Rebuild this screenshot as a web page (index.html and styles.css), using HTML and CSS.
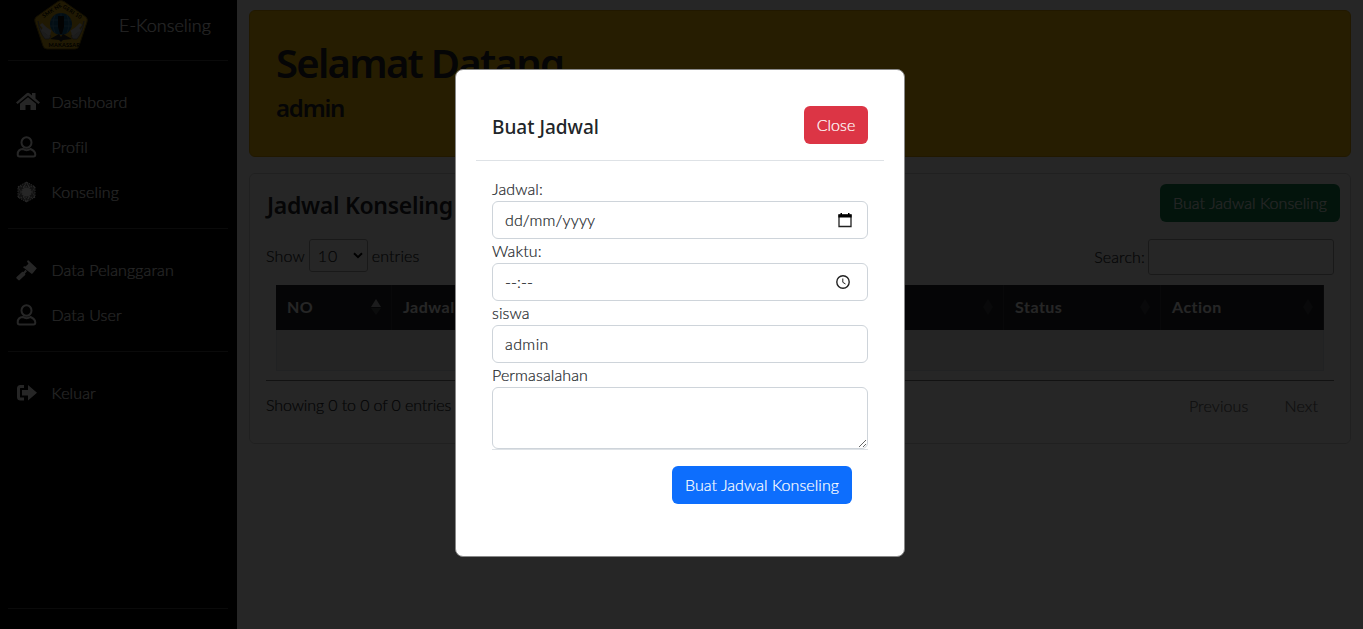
FILE: index.html
```html
<!DOCTYPE html>
<html lang="id">
<head>
<meta charset="utf-8">
<title>E-Konseling</title>
<link rel="stylesheet" href="styles.css">
</head>
<body>
<div class="layout">
  <aside class="sidebar">
    <div class="brand">
      <svg class="logo" viewBox="0 0 54 50">
        <path d="M24 1.5Q27-.5 30 1.500L52 17Q54 19 53 22L45 46Q44 49 41 49H13Q10 49 9 46L1 22Q0 19 2 17Z" fill="#d3a514" stroke="#765b0b"/>
        <circle cx="27" cy="24" r="11" fill="#12608f"/>
        <path d="M27 13v22M17 20h20M16 26h22M21 15q-4 9 0 18M33 15q4 9 0 18" fill="none" stroke="#4b90b4" stroke-width=".8"/>
        <path d="M4 21Q6 32 17 36L15 39H11Q5 32 4 21ZM50 21Q48 32 37 36L39 39H43Q49 32 50 21Z" fill="#bbb" stroke="#666" stroke-width=".7"/>
        <path d="M7 24q4 5 10 8M47 24q-4 5-10 8M8 29l8 6M46 29l-8 6" fill="none" stroke="#ccc" stroke-width="3"/>
        <path d="M16 39l9-5 2 3 2-3 9 5-9 1-2 2-2-2Z" fill="#222"/>
        <path d="M24 16h6v11l-2 7h-2l-2-7Z" fill="#111"/>
        <path id="arc" d="M9 18.500L27 7L46 19" fill="none"/>
        <text class="logo-text"><textPath href="#arc" startOffset="1">SMK NEGERI 10</textPath></text>
        <text class="logo-text" x="14.500" y="46.500">MAKASSAR</text>
      </svg>
      <span class="brand-name">E-Konseling</span>
    </div>
    <hr class="rule">
    <nav class="menu">
      <a class="item"><svg class="icon" viewBox="0 0 24 20"><path d="M0 10.400L10.700 1.300q1.300-1 2.600 0L16 3.600V1h3.500v5.600L24 10.400l-1.600 1.700L12 3.600 1.600 12.100Z"/><path d="M4 11.800L12 5.200l8 6.600V18h-5.500v-5h-5v5H4Z"/></svg>Dashboard</a>
      <a class="item"><svg class="icon line" viewBox="0 0 24 22"><ellipse cx="10.500" cy="6.500" rx="5" ry="5.300"/><path d="M7 13C3.500 13 1.700 15 1.700 18.500Q1.700 20.500 3.500 20.500H17.500Q19.300 20.500 19.300 18.500 19.300 15 14.500 13 10.500 15.300 7 13Z"/></svg>Profil</a>
      <a class="item"><svg class="icon" viewBox="0 0 24 22"><path d="M10.500 1L19 5.700v10.600L10.500 21 2 16.300V5.700Z" opacity=".45"/><path d="M10.500 1L19 5.700v10.600L10.500 21 2 16.300V5.700ZM10.500 1L6 11l4.500 10L15 11ZM2 5.700h17L10.500 21ZM2 16.300h17L10.500 1Z" fill="none" stroke="#fff" stroke-dasharray="1.500 1"/><circle cx="10.500" cy="11" r="4.500"/></svg>Konseling</a>
    </nav>
    <hr class="rule">
    <nav class="menu">
      <a class="item"><svg class="icon" viewBox="0 0 24 22"><path d="M12 1l8.800 8.300-3.800 4.700-1.100 1L7 8.200l1-1 1.500.2 3-2.600-1.500-2.300Z"/><path d="M9.500 10.700l1.500 1.500-2 2.300.4 1.200-5.600 5.400q-.8.800-1.500 0L.6 19.400q-.7-.7 0-1.500L6.300 12.700l1.200.2Z"/></svg>Data Pelanggaran</a>
      <a class="item"><svg class="icon line" viewBox="0 0 24 22"><ellipse cx="10.500" cy="6.500" rx="5" ry="5.300"/><path d="M7 13C3.500 13 1.700 15 1.700 18.500Q1.700 20.500 3.500 20.500H17.500Q19.300 20.500 19.300 18.500 19.300 15 14.500 13 10.500 15.300 7 13Z"/></svg>Data User</a>
    </nav>
    <hr class="rule">
    <nav class="menu">
      <a class="item"><svg class="icon" viewBox="0 0 24 20"><path d="M8 3.500H4.500Q2.500 3.500 2.500 5.500V14q0 2 2 2H8" fill="none" stroke="#fff" stroke-width="3"/><path d="M6 7h6V2L21 9.700 12 17.500v-5H6Z"/></svg>Keluar</a>
    </nav>
    <hr class="rule bottom">
  </aside>
  <main class="main">
    <section class="welcome">
      <h1 class="hello">Selamat Datang</h1>
      <h2 class="user">admin</h2>
    </section>
    <section class="card">
      <div class="card-head">
        <h2 class="card-title">Jadwal Konseling</h2>
        <button class="btn green">Buat Jadwal Konseling</button>
      </div>
      <div class="tools">
        <div class="length"><span>Show</span><span class="select">10<svg class="chev" viewBox="0 0 10 7"><path d="M1 1.200l4 4 4-4"/></svg></span><span>entries</span></div>
        <div class="search"><span>Search:</span><input class="search-box"></div>
      </div>
      <div class="table">
        <div class="tr">
          <div class="th">NO<svg class="sort" viewBox="0 0 10 18"><path d="M5 1l5 8H0Z" opacity=".7"/><path d="M5 17l5-7H0Z" opacity=".2"/></svg></div>
          <div class="th">Jadwal</div>
          <div class="th"><span></span><svg class="sort" viewBox="0 0 10 18"><path d="M5 1l5 8-5 8-5-8Z" opacity=".12"/></svg></div>
          <div class="th">Status<svg class="sort" viewBox="0 0 10 18"><path d="M5 1l5 8-5 8-5-8Z" opacity=".12"/></svg></div>
          <div class="th">Action<svg class="sort" viewBox="0 0 10 18"><path d="M5 1l5 8-5 8-5-8Z" opacity=".12"/></svg></div>
        </div>
        <div class="empty"></div>
      </div>
      <div class="foot">
        <span class="info">Showing 0 to 0 of 0 entries</span>
        <span class="pager"><span>Previous</span><span>Next</span></span>
      </div>
    </section>
  </main>
</div>
<div class="backdrop">
  <form class="modal">
    <div class="modal-head">
      <h3 class="modal-title">Buat Jadwal</h3>
      <button type="button" class="btn red">Close</button>
    </div>
    <div class="modal-body">
      <label class="label">Jadwal:</label>
      <div class="field date"><span>dd/mm/yyyy</span><svg class="cal" viewBox="0 0 14 15"><path d="M1 2h12v11.500H1Z" fill="none" stroke="#222" stroke-width="1.300"/><path d="M.4 1.500h13.200V4.500H.4ZM2.500 0H4v2H2.500ZM10 0h1.500v2H10Z"/></svg></div>
      <label class="label">Waktu:</label>
      <div class="field time"><span>--:--</span><svg class="clock" viewBox="0 0 14 14"><circle cx="7" cy="7" r="6.200"/><path class="hand" d="M6.800 3.500V7.300L9.500 9"/></svg></div>
      <label class="label">siswa</label>
      <div class="field"><span class="val">admin</span></div>
      <label class="label">Permasalahan</label>
      <textarea class="field area"></textarea>
      <div class="modal-foot"><button type="button" class="btn blue">Buat Jadwal Konseling</button></div>
    </div>
  </form>
</div>
</body>
</html>
```
FILE: styles.css
```css
* { box-sizing: border-box; }
body {
  margin: 0;
  height: 629px;
  overflow: hidden;
  background: #fff;
  color: #212529;
  font: 300 16px/24px Lato, "Open Sans", sans-serif;
  letter-spacing: .12px;
  -webkit-text-stroke: .2px currentColor;
}
h1, h2, h3 { margin: 0; font-family: "Noto Sans", "Open Sans", sans-serif; font-weight: 600; -webkit-text-stroke: 0; }
.layout { display: flex; height: 629px; }
.sidebar { display: flex; flex-direction: column; width: 237px; padding: 0 9px 20px 8px; background: #000; color: #fff; }
.brand { display: flex; align-items: center; height: 60px; padding: 0 0 10px 26px; }
.logo { width: 54px; height: 50px; }
.logo-text { font: 700 5.5px Lato, sans-serif; letter-spacing: .2px; fill: #000; }
.brand-name { margin-left: 31px; font-size: 18px; letter-spacing: 0; }
.rule { width: 220px; height: 1px; margin: 0; border: 0; background: #444; }
.bottom { margin-top: auto; }
.menu { padding: 18px 0 14px 8px; }
.item { display: flex; align-items: center; height: 45px; }
.icon { width: 24px; height: 22px; margin-right: 11.500px; fill: #fff; }
.line { fill: none; stroke: #fff; stroke-width: 2; }
.main { flex: 1; padding: 10px 12px; }
.welcome { height: 147px; padding: 28px 26px; border: 1px solid #d9a406; border-radius: 6px; background: #ffc107; }
.hello { font-size: 40px; line-height: 48px; letter-spacing: -1.720px; }
.user { margin-top: 6px; font-size: 24px; line-height: 29px; letter-spacing: -1.200px; }
.card { height: 271px; margin-top: 16px; padding: 10px 16px; border: 1px solid #d5d5d5; border-radius: 6px; }
.card-head { display: flex; justify-content: space-between; height: 55px; margin-right: -6px; }
.card-title { padding: 7px 0 0 1px; font-size: 23px; line-height: 28px; letter-spacing: -.300px; }
.btn { height: 38px; padding: 0; border: 0; border-radius: 6px; color: #fff; font: inherit; letter-spacing: .06px; }
.green { width: 180px; background: #198754; }
.blue { width: 180px; background: #0d6efd; }
.red { width: 64px; background: #dc3545; }
.tools { display: flex; justify-content: space-between; height: 46px; }
.length { display: flex; align-items: center; gap: 4px; height: 33px; }
.select { display: flex; justify-content: space-between; align-items: center; width: 59px; height: 33px; padding: 0 4px 0 8px; border: 1px solid #aaa; border-radius: 3px; letter-spacing: 1px; }
.chev { width: 10px; height: 7px; fill: none; stroke: #000; stroke-width: 2; }
.search { display: flex; align-items: center; gap: 3px; height: 36px; }
.search-box { width: 186px; height: 36px; border: 1px solid #aaa; border-radius: 3px; background: transparent; }
.table { margin: 0 10px; }
.tr { display: grid; grid-template-columns: 116px 156px 456px 157px 163px; height: 45px; background: #212529; color: #fff; -webkit-text-stroke: 0; }
.th { display: flex; justify-content: space-between; align-items: center; padding: 0 10px 1px 11px; border-right: 1px solid #373b3e; font-weight: 700; letter-spacing: .500px; }
.th:nth-child(2) { border-right: 0; }
.sort { width: 10px; height: 18px; fill: #fff; }
.empty { height: 41px; border: 1px solid #dee2e6; border-top: 0; background: #f2f2f2; }
.foot { display: flex; justify-content: space-between; margin-top: 9px; padding-top: 12px; border-top: 1px solid #777; }
.info { letter-spacing: -.100px; }
.pager { display: flex; gap: 36px; padding: 1px 16px 0 0; color: #666; }
.backdrop { position: absolute; inset: 0; display: flex; justify-content: center; align-items: flex-start; padding: 69px 3px 0 0; background: rgba(0, 0, 0, .85); }
.modal { width: 450px; height: 488px; padding: 20px; border: 1px solid #888; border-radius: 8px; background: #fff; }
.modal-head { display: flex; justify-content: space-between; height: 71px; padding: 16px 16px 0; border-bottom: 1px solid #dee2e6; }
.modal-title { padding-top: 6px; font-size: 19px; line-height: 30px; font-weight: 500; letter-spacing: 0; }
.modal-body { padding: 16px 16px 0; }
.label { display: block; height: 24px; }
.field { display: flex; justify-content: space-between; align-items: center; width: 100%; height: 38px; padding: 0 12px; border: 1px solid #ced4da; border-radius: 6px; background: #fff; }
.date { padding-right: 15px; }
.time { padding-right: 17px; }
.val { letter-spacing: .400px; }
.cal { width: 14px; height: 15px; }
.clock { width: 14px; height: 14px; fill: none; stroke: #222; stroke-width: 1.400; }
.hand { stroke-width: 1; }
.area { display: block; height: 62px; resize: vertical; }
.modal-foot { display: flex; justify-content: flex-end; padding: 16px 16px 0; border-top: 1px solid #dee2e6; }
```
